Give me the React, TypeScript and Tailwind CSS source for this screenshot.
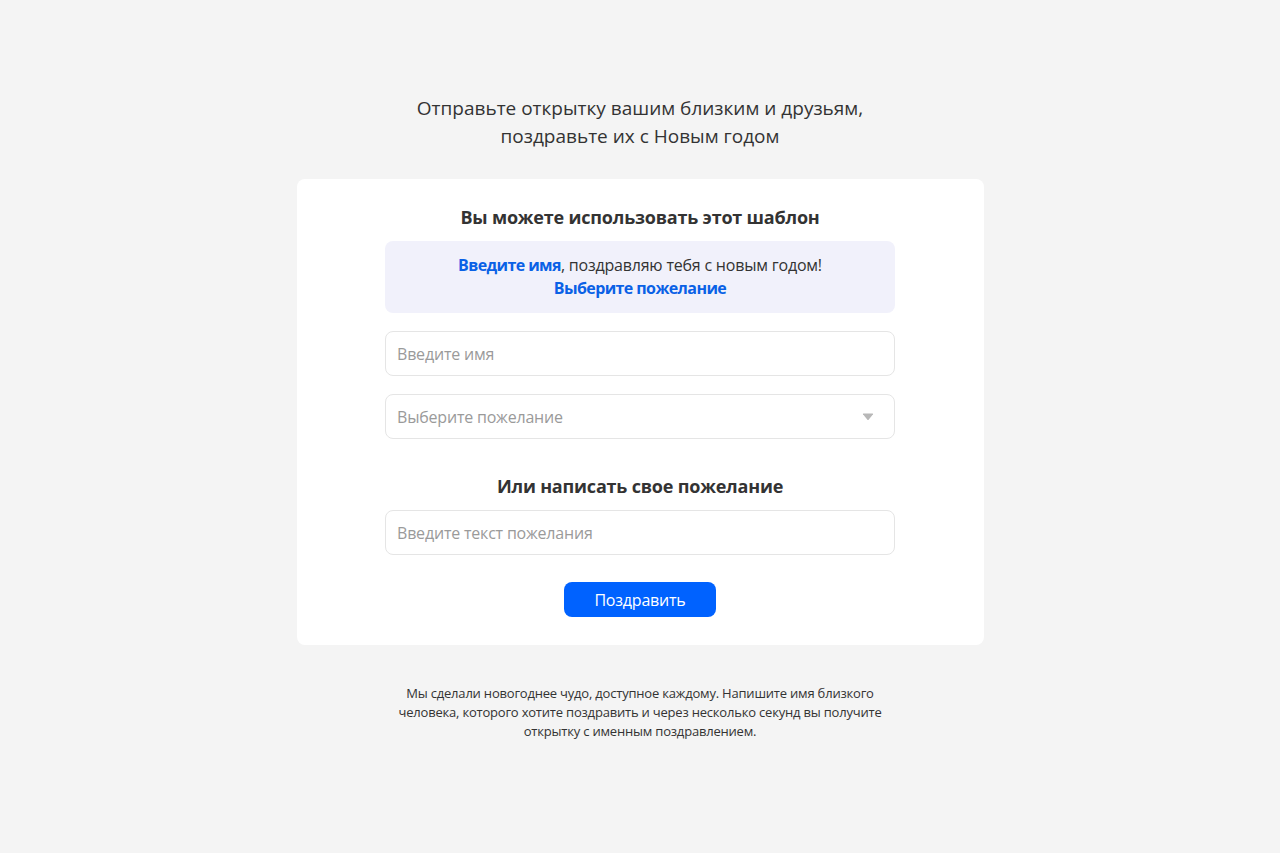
import React from "react";

export default function App() {
  return (
    <div
      className="min-h-[853px] w-full bg-[#f4f4f4] flex flex-col items-center"
      style={{ fontFamily: '"Open Sans", "Noto Sans", sans-serif' }}
    >
      <h1 className="mt-[94px] text-center text-[19px] leading-[28px] text-[#333333] font-normal tracking-[0px]">
        Отправьте открытку вашим близким и друзьям,
        <br />
        поздравьте их с Новым годом
      </h1>

      <div className="mt-[29px] w-[687px] bg-white rounded-[8px] flex flex-col items-center pt-[24px] pb-[28px]">
        <h2 className="text-[18px] leading-[28px] font-bold text-[#333333] tracking-[-0.2px]">
          Вы можете использовать этот шаблон
        </h2>
        <div className="mt-[10px] w-[510px] h-[72px] rounded-[8px] bg-[#f1f1fb] flex flex-col items-center justify-center text-[16px] leading-[23px] text-[#333333] tracking-[-0.2px]">
          <div>
            <span className="font-bold text-[#0a61e6] tracking-[-0.6px]">Введите имя</span>, поздравляю тебя с новым годом!
          </div>
          <div className="font-bold text-[#0a61e6] tracking-[-0.6px]">Выберите пожелание</div>
        </div>

        <div className="mt-[18px] w-[510px] h-[45px] rounded-[8px] border border-[#e5e5e5] flex items-center px-[11px] text-[16px] text-[#9a9a9a] tracking-[-0.2px]">
          Введите имя
        </div>
        <div className="mt-[18px] w-[510px] h-[45px] rounded-[8px] border border-[#e5e5e5] flex items-center justify-between pl-[11px] pr-[20px] text-[16px] text-[#9a9a9a] tracking-[-0.2px]">
          <span>Выберите пожелание</span>
          <svg width="12" height="8" viewBox="0 0 12 8">
            <path d="M1 1.2 Q0.6 0.5 1.5 0.5 H10.5 Q11.4 0.5 11 1.2 L6.6 6.8 Q6 7.4 5.4 6.8 Z" fill="#b8b8b8" />
          </svg>
        </div>

        <h2 className="mt-[33px] text-[18px] leading-[28px] font-bold text-[#333333] tracking-[-0.2px]">
          Или написать свое пожелание
        </h2>
        <div className="mt-[10px] w-[510px] h-[45px] rounded-[8px] border border-[#e5e5e5] flex items-center px-[11px] text-[16px] text-[#9a9a9a] tracking-[-0.2px]">
          Введите текст пожелания
        </div>

        <button className="mt-[27px] w-[152px] h-[35px] rounded-[8px] bg-[#0062ff] text-white text-[16px] tracking-[-0.2px]">
          Поздравить
        </button>
      </div>

      <p className="mt-[39px] w-[500px] text-center text-[13px] leading-[19px] text-[#333333] tracking-[-0.2px]">
        Мы сделали новогоднее чудо, доступное каждому. Напишите имя близкого
        человека, которого хотите поздравить и через несколько секунд вы получите
        открытку с именным поздравлением.
      </p>
    </div>
  );
}
